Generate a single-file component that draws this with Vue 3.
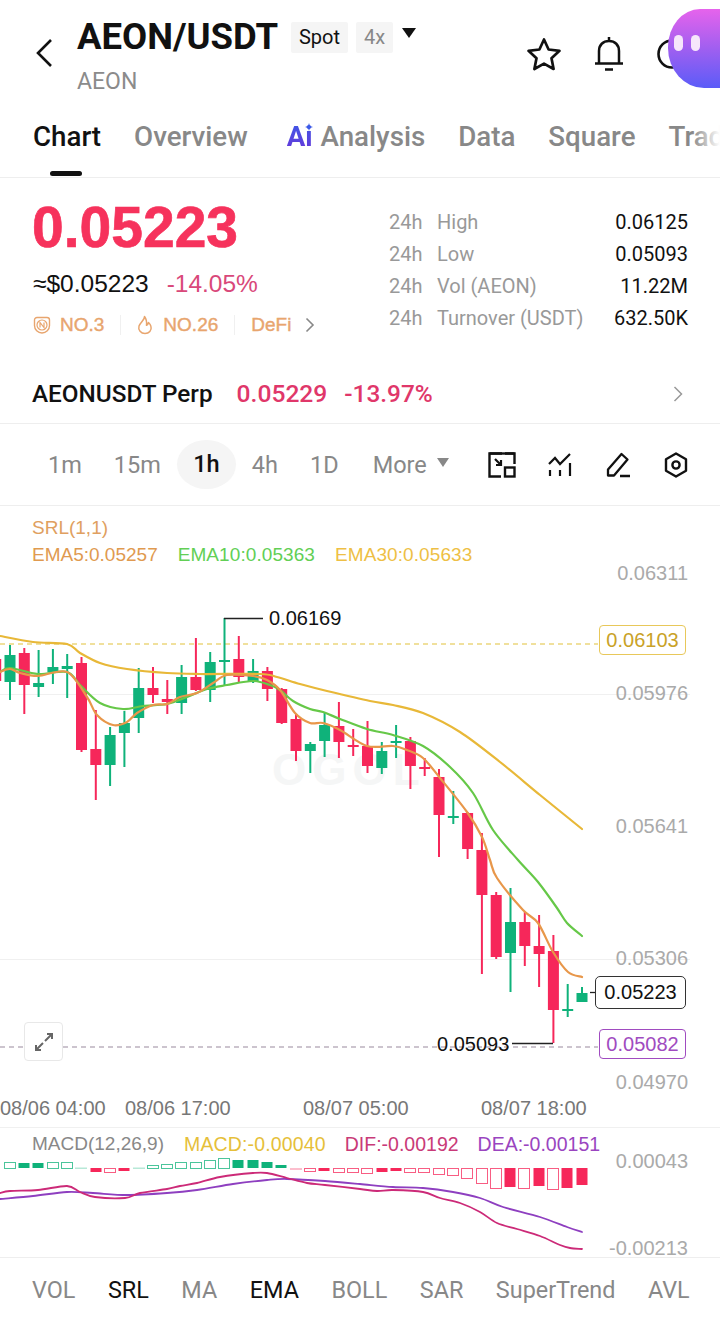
<template>
  <div class="page">
    <header class="top">
      <svg class="back" width="18" height="30" viewBox="0 0 18 30"><path d="M16 2 3 15l13 13" fill="none" stroke="#111" stroke-width="2.6" /></svg>
      <div class="pair">
        <div class="pair-line">
          <span class="pair-name">AEON/USDT</span>
          <span class="tag">Spot</span>
          <span class="tag tag-gray">4x</span>
          <span class="tag-arrow"></span>
        </div>
        <div class="pair-sub">AEON</div>
      </div>
      <div class="top-icons">
        <svg width="36" height="34" viewBox="0 0 36 34"><path d="M18 2.5l4.6 10 10.9 1.3-8 7.4 2.1 10.8L18 26.6 8.400 32l2.100-10.800-8-7.400 10.900-1.300z" fill="none" stroke="#111" stroke-width="2.700" stroke-linejoin="round" /></svg>
        <svg width="32" height="36" viewBox="0 0 32 36"><path d="M16 1v4M6 27V15C6 9 10 5 16 5s10 4 10 10v12M2 27.500h28M12 33.500h8" fill="none" stroke="#111" stroke-width="2.500" /></svg>
        <svg width="32" height="32" viewBox="0 0 32 32"><circle cx="16" cy="16" r="13.500" fill="none" stroke="#111" stroke-width="2.600" /></svg>
      </div>
    </header>
    <div class="bubble"><i></i><i></i></div>

    <nav class="tabs">
      <span class="tab tab-on">Chart</span>
      <span class="tab">Overview</span>
      <span class="tab tab-ai">
        <span class="ai-mark">Ai</span>
        <svg class="spark" width="8" height="8" viewBox="0 0 8 8"><path d="M4 0l1 3 3 1-3 1-1 3-1-3-3-1 3-1z" fill="#3a5be8" /></svg>
        Analysis
      </span>
      <span class="tab">Data</span>
      <span class="tab">Square</span>
      <span class="tab">Trade</span>
      <span class="tabs-fade"></span>
    </nav>

    <section class="price">
      <div class="price-left">
        <div class="price-big">0.05223</div>
        <div class="price-sub"><span>≈$0.05223</span><span class="chg">-14.05%</span></div>
        <div class="rank">
          <svg width="18" height="18" viewBox="0 0 18 18"><path d="M4 1.500h10a2.500 2.500 0 0 1 2.500 2.500v5.500a7.500 7.500 0 0 1-15 0V4A2.500 2.500 0 0 1 4 1.500z" fill="none" stroke="#e8a56e" stroke-width="1.400" /><circle cx="9" cy="9" r="5" fill="none" stroke="#e8a56e" stroke-width="1.200" /><path d="M7 11.500v-5l4 5v-5" fill="none" stroke="#e8a56e" stroke-width="1.200" /></svg>
          <span class="rank-txt r1">NO.3</span>
          <span class="rank-sep"></span>
          <svg width="16" height="20" viewBox="0 0 16 20"><path d="M7.500 1.500c.5 3-4 5.500-5.500 9.500-1.200 4 2 7.500 6 7.500s7-3 6-7c-.4-1.800-1.500-3-2.500-4-.3 1.500-1 2.300-2 2.800.4-3.300-.3-6.500-2-8.800z" fill="none" stroke="#e8a56e" stroke-width="1.500" stroke-linejoin="round" /></svg>
          <span class="rank-txt r2">NO.26</span>
          <span class="rank-sep"></span>
          <span class="rank-txt r3">DeFi</span>
          <svg class="rank-go" width="10" height="16" viewBox="0 0 10 16"><path d="M1.500 1.500 8 8l-6.500 6.500" fill="none" stroke="#888" stroke-width="1.600" /></svg>
        </div>
      </div>
      <div class="stats">
        <div class="stat" v-for="s in stats" :key="s.name">
          <span class="stat-h">24h</span>
          <span class="stat-name">{{ s.name }}</span>
          <span class="stat-val">{{ s.val }}</span>
        </div>
      </div>
    </section>

    <div class="perp">
      <span class="perp-name">AEONUSDT Perp</span>
      <span class="perp-num">0.05229</span>
      <span class="perp-chg">-13.97%</span>
      <svg class="perp-go" width="10" height="16" viewBox="0 0 10 16"><path d="M1.500 1 8.500 8l-7 7" fill="none" stroke="#999" stroke-width="1.500" /></svg>
    </div>

    <div class="frames">
      <span class="frame f1">1m</span>
      <span class="frame f2">15m</span>
      <span class="frame frame-on">1h</span>
      <span class="frame f4">4h</span>
      <span class="frame f5">1D</span>
      <span class="frame f6">More</span>
      <span class="more-arrow"></span>
      <div class="tools">
        <svg width="28" height="26" viewBox="0 0 28 26"><path d="M14 1.500H1.500v23H13M17 1.500h9.500V12" fill="none" stroke="#111" stroke-width="2.400" /><path d="M1.500 1.500h25" stroke="#111" stroke-width="2.400" /><rect x="17" y="15.500" width="9.500" height="9" fill="none" stroke="#111" stroke-width="2.400" /><path d="M7 7l6 6M8 13h5V8" fill="none" stroke="#111" stroke-width="2.200" /></svg>
        <svg width="24" height="24" viewBox="0 0 24 24"><path d="M1 11l6-6 5 6 10-10" fill="none" stroke="#111" stroke-width="2.200" /><path d="M2 17v6M12 17v6M22 10v13" stroke="#111" stroke-width="2.200" /></svg>
        <svg width="24" height="26" viewBox="0 0 24 26"><path d="M2 23.500v-6L15.500 2l6 5.500L8 23.500zM14 24h10" fill="none" stroke="#111" stroke-width="2.300" stroke-linejoin="round" /></svg>
        <svg width="24" height="26" viewBox="0 0 24 26"><path d="M12 1.500l10 5.700v11.600l-10 5.700-10-5.700V7.200z" fill="none" stroke="#111" stroke-width="2.400" stroke-linejoin="round" /><circle cx="12" cy="13" r="3.600" fill="none" stroke="#111" stroke-width="2.400" /></svg>
      </div>
    </div>

    <section class="chart">
      <svg class="plot" width="720" height="751" viewBox="0 506 720 751">
        <!-- grid -->
        <path d="M0 694.500H690M0 959.500H690M0 1127.500H720" stroke="#f0f0f0" fill="none" />
        <text class="mark" x="272" y="785">OGOL</text>

        <line x1="0" x2="598" y1="644" y2="644" stroke="#ecd67c" stroke-width="1.300" stroke-dasharray="5 4" />
        <line x1="0" x2="598" y1="1047" y2="1047" stroke="#9a8a9e" stroke-width="1.200" stroke-dasharray="5 4" />

        <!-- candles -->
        <g v-for="c in candles" :key="c[0]">
          <line :x1="c[0]" :x2="c[0]" :y1="c[1]" :y2="c[2]" :stroke="c[5] ? green : red" stroke-width="2" />
          <rect :x="c[0] - 5.500" :y="c[3]" width="11" :height="c[4] - c[3]" :fill="c[5] ? green : red" />
        </g>

        <path :d="ema30" class="ln" stroke="#e8b838" />
        <path :d="ema10" class="ln" stroke="#66c848" />
        <path :d="ema5" class="ln" stroke="#e8974a" />

        <!-- high / low callouts -->
        <path d="M224 618.500H263" stroke="#222" stroke-width="1.300" fill="none" />
        <text class="callout" x="269" y="625">0.06169</text>
        <path d="M512 1043.500H553" stroke="#222" stroke-width="1.300" fill="none" />
        <text class="callout" x="437" y="1051">0.05093</text>
        <path d="M590 992.500H595" stroke="#222" stroke-width="1.300" fill="none" />

        <!-- axis -->
        <text v-for="a in axis" :key="a[0]" class="ax" x="688" :y="a[1]">{{ a[0] }}</text>
        <text v-for="d in dates" :key="d[0]" class="date" :x="d[1]" y="1115">{{ d[0] }}</text>

        <!-- macd -->
        <g v-for="b in bars" :key="b.x">
          <rect :x="b.x - 5.500" :y="b.y + (b.solid ? 0 : .5)" width="11" :height="b.h" :fill="b.solid ? b.col : '#fff'" :stroke="b.solid ? 'none' : b.col" :stroke-opacity="b.h < 2 ? .3 : .75" />
        </g>
        <path :d="dea" class="ln thin" stroke="#8e3fc0" />
        <path :d="dif" class="ln thin" stroke="#cc2a78" />
      </svg>

      <div class="legend">
        <div class="srl">SRL(1,1)</div>
        <div class="emas">
          <span class="e5">EMA5:0.05257</span>
          <span class="e10">EMA10:0.05363</span>
          <span class="e30">EMA30:0.05633</span>
        </div>
      </div>

      <span class="badge badge-y">0.06103</span>
      <span class="badge badge-k">0.05223</span>
      <span class="badge badge-p">0.05082</span>

      <span class="expand">
        <svg width="20" height="20" viewBox="0 0 20 20"><path d="M11 9l7-7M13 2h5v5M9 11l-7 7M2 13v5h5" fill="none" stroke="#666" stroke-width="2" /></svg>
      </span>

      <div class="macd">
        <span class="m0">MACD(12,26,9)</span>
        <span class="m1">MACD:-0.00040</span>
        <span class="m2">DIF:-0.00192</span>
        <span class="m3">DEA:-0.00151</span>
      </div>
    </section>

    <nav class="inds">
      <span v-for="t in inds" :key="t" class="ind" :class="{ 'ind-on': t === 'SRL' || t === 'EMA' }">{{ t }}</span>
      <span class="inds-fade"></span>
    </nav>
  </div>
</template>

<script setup>
const red = '#f6275a'
const green = '#0fb27a'

const stats = [
  { name: 'High', val: '0.06125' },
  { name: 'Low', val: '0.05093' },
  { name: 'Vol (AEON)', val: '11.22M' },
  { name: 'Turnover (USDT)', val: '632.50K' },
]

const inds = ['VOL', 'SRL', 'MA', 'EMA', 'BOLL', 'SAR', 'SuperTrend', 'AVL']

const axis = [
  ['0.06311', 580], ['0.05976', 700], ['0.05641', 833], ['0.05306', 965], ['0.04970', 1089],
  ['0.00043', 1168], ['-0.00213', 1255],
]
const dates = [
  ['08/06 04:00', 0], ['08/06 17:00', 125], ['08/07 05:00', 303], ['08/07 18:00', 481],
]

// wick top, wick bottom, body top, body bottom, green?
const raw = [
  [652, 690, 659, 681, 0], [645, 700, 655, 682, 1], [648, 714, 653, 685, 0], [650, 697, 683, 687, 1],
  [649, 684, 667, 672, 1], [654, 698, 666, 669, 1], [657, 752, 663, 750, 0], [710, 800, 749, 765, 0],
  [727, 786, 735, 765, 1], [711, 767, 723, 733, 1], [668, 733, 688, 718, 1], [667, 703, 688, 695, 0],
  [680, 714, 699, 702, 0], [665, 714, 677, 703, 1], [638, 691, 677, 690, 0], [652, 702, 662, 690, 1],
  [618, 685, 660, 662, 1], [636, 683, 659, 677, 0], [659, 683, 671, 681, 1], [667, 701, 671, 689, 0],
  [688, 724, 689, 723, 0], [714, 761, 719, 751, 0], [742, 773, 744, 751, 1], [713, 757, 725, 741, 1],
  [702, 758, 726, 742, 0], [729, 756, 745, 747, 0], [721, 773, 746, 766, 0], [742, 774, 751, 768, 1],
  [725, 758, 741, 743, 1], [737, 789, 741, 766, 0], [758, 776, 767, 769, 0], [769, 857, 777, 815, 0],
  [791, 824, 816, 818, 1], [812, 859, 813, 849, 0], [833, 974, 850, 895, 0], [892, 959, 895, 957, 0],
  [888, 992, 922, 953, 1], [912, 966, 922, 946, 0], [915, 987, 946, 954, 0], [935, 1043, 951, 1010, 0],
  [984, 1017, 1009, 1011, 1], [987, 1002, 993, 1002, 1],
]
const stepX = i => -4.3 + 14.3 * i
const candles = raw.map((c, i) => [stepX(i), c[0], c[1], c[2], c[3], c[4]])

// smooth a "x,y x,y" list into a path
const smooth = str => {
  const p = str.split(' ').map(s => s.split(',').map(Number))
  let d = `M${p[0][0]} ${p[0][1]}`
  for (let i = 0; i < p.length - 1; i++) {
    const a = p[i - 1] || p[i]
    const b = p[i]
    const c = p[i + 1]
    const e = p[i + 2] || c
    const k = 0.16
    d += ` C${(b[0] + (c[0] - a[0]) * k).toFixed(1)} ${(b[1] + (c[1] - a[1]) * k).toFixed(1)} ${(c[0] - (e[0] - b[0]) * k).toFixed(1)} ${(c[1] - (e[1] - b[1]) * k).toFixed(1)} ${c[0]} ${c[1]}`
  }
  return d
}

const ema30 = smooth('0,636 33,642 67,644 80,653 100,663 127,669 167,673 200,674 260,674 277,677 300,684 327,691 370,701 393,705 423,713 460,732 500,762 540,795 582,829')
const ema10 = smooth('0,672 10,668 38,674 67,672 80,685 100,703 123,709 143,706 167,704 187,697 207,689 227,685 253,681 270,685 280,690 293,701 310,709 323,712 340,719 367,729 393,735 423,746 450,767 473,793 493,830 518,860 538,882 557,908 567,923 582,936')
const ema5 = smooth('0,672 10,669 20,673 38,676 67,672 87,697 97,715 113,725 127,722 137,713 153,705 167,704 180,697 197,693 213,683 227,675 253,676 267,680 280,690 295,713 310,723 323,723 340,730 367,746 393,746 407,750 423,758 440,778 467,812 482,837 490,860 497,878 523,910 538,923 553,952 568,972 582,977')

// [zero line at 1168] top or bottom of each histogram bar, h flag: filled
const histo = [
  [10, -6, 0], [24, -5, 1], [38, -5, 1], [53, -6, 0], [67, -6, 0], [81, -.5, 0], [96, 4, 1], [110, 4, 0],
  [124, 3, 1], [139, -.5, 0], [153, -3, 0], [167, -4, 0], [181, -6, 0], [196, -6, 0], [210, -8, 0], [224, -10, 0],
  [238, -8, 1], [253, -8, 1], [267, -6, 1], [281, -3, 1], [296, 1, 0], [310, 3, 0], [324, 3, 1], [339, 4, 0],
  [353, 4, 0], [367, 5, 0], [382, 4, 1], [396, 3, 1], [410, 4, 0], [424, 4, 0], [439, 6, 0], [453, 7, 0],
  [467, 10, 0], [482, 15, 0], [496, 20, 0], [510, 19, 1], [524, 20, 0], [539, 18, 1], [553, 21, 0], [567, 20, 1], [582, 17, 1],
]
const bars = histo.map(([x, v, solid]) => {
  const up = v < 0
  const h = Math.abs(v)
  return { x, y: up ? 1168 - h : 1168, h, solid: !!solid, col: up ? green : red }
})

const dif = smooth('0,1193 10,1191 38,1190 67,1186 80,1192 95,1197 125,1198 140,1193 167,1189 180,1186 197,1183 220,1177 253,1173 267,1173 287,1178 307,1183 325,1185 360,1189 377,1191 393,1190 423,1192 440,1198 460,1203 480,1212 497,1223 517,1229 540,1236 560,1245 570,1248 582,1249')
const dea = smooth('0,1199 33,1196 67,1192 93,1193 127,1195 167,1193 197,1190 233,1184 267,1180 287,1179 325,1181 360,1184 393,1187 423,1188 453,1192 480,1198 503,1207 540,1217 567,1227 582,1232')
</script>

<style>
html, body { margin: 0; padding: 0; background: #fff; }
</style>

<style scoped>
.page {
  width: 720px;
  height: 1318px;
  overflow: hidden;
  position: relative;
  background: #fff;
  font-family: "Liberation Sans", Arial, sans-serif;
  color: #111;
}
.top {
  height: 102px;
  display: flex;
  align-items: flex-start;
  padding-left: 35px;
  box-sizing: border-box;
}
.back { margin-top: 38px; }
.pair { margin-left: 24px; padding-top: 15px; }
.pair-line { display: flex; align-items: center; height: 42px; }
.pair-name {
  font: 700 36.500px "Roboto", sans-serif;
  width: 214px;
}
.tag {
  height: 31px;
  line-height: 31px;
  width: 57px;
  text-align: center;
  background: #f5f5f5;
  border-radius: 2px;
  font: 400 20px/31px "Roboto", sans-serif;
  margin-top: 3px;
}
.tag-gray { width: 37px; margin-left: 8px; color: #888; }
.tag-arrow {
  margin: -7px 0 0 9px;
  border-left: 7px solid transparent;
  border-right: 7px solid transparent;
  border-top: 10px solid #111;
}
.pair-sub {
  margin-top: 12px;
  font: 400 23px/26px "Roboto", sans-serif;
  color: #8b8b8b;
}
.top-icons {
  position: absolute;
  left: 526px;
  top: 36px;
  display: flex;
  align-items: center;
  gap: 31px;
}
.bubble {
  position: absolute;
  left: 668px;
  top: 9px;
  width: 90px;
  height: 79px;
  border-radius: 32px 0 0 36px / 38px 0 0 40px;
  background: linear-gradient(180deg, #e663ec 0%, #a05ff0 50%, #5b5cf8 100%);
  display: flex;
  gap: 8px;
  padding: 26px 0 0 6px;
  box-sizing: border-box;
}
.bubble i {
  width: 9px;
  height: 16px;
  border-radius: 5px;
  background: #f6e6fb;
}
.tabs {
  height: 76px;
  box-sizing: border-box;
  border-bottom: 1px solid #eee;
  display: flex;
  padding: 16px 0 0 33px;
  gap: 33px;
  white-space: nowrap;
  position: relative;
  overflow: hidden;
}
.tab {
  font: 500 27.700px/38px "Roboto", sans-serif;
  color: #888;
  position: relative;
  flex: none;
}
.tab-on { color: #111; }
.tab-on::after {
  content: "";
  position: absolute;
  left: 17px;
  width: 32px;
  top: 53px;
  height: 5px;
  border-radius: 3px;
  background: #111;
}
.tab-ai { margin-left: 6px; }
.ai-mark {
  font-weight: 700;
  margin-right: 1px;
  background: linear-gradient(180deg, #3a5be8, #6a35d8);
  -webkit-background-clip: text;
  background-clip: text;
  color: transparent;
}
.spark { position: absolute; left: 18px; top: 5px; }
.tabs-fade {
  position: absolute;
  right: 0;
  top: 0;
  bottom: 0;
  width: 28px;
  background: linear-gradient(90deg, rgba(255, 255, 255, 0), #fff);
}
.price {
  height: 176px;
  display: flex;
  justify-content: space-between;
  padding: 0 32px 0 33px;
  box-sizing: border-box;
}
.price-left { width: 340px; }
.price-big {
  margin: 16px 0 0 -1px;
  font: 700 57px/66px "Liberation Sans", sans-serif;
  color: #f6325c;
  -webkit-text-stroke: .7px #f6325c;
}
.price-sub {
  margin-top: 10px;
  font: 400 24.500px/28px "Liberation Sans", sans-serif;
  display: flex;
  gap: 18px;
}
.chg { color: #d9487a; }
.rank {
  display: flex;
  align-items: center;
  margin-top: 13px;
  height: 28px;
}
.rank-txt { font: 500 19px/28px "Liberation Sans", sans-serif; color: #e8a56e; -webkit-text-stroke: .4px #e8a56e; }
.r1 { margin-left: 9px; }
.r2 { margin-left: 10px; }
.rank-sep { width: 1px; height: 20px; background: #f0f0f0; margin: 0 16px; }
.rank-go { margin-left: 14px; }
.stats { padding-top: 28px; width: 299px; }
.stat {
  display: flex;
  height: 32px;
  font: 400 20px/32px "Roboto", sans-serif;
  color: #999;
}
.stat-h { width: 48px; }
.stat-val { margin-left: auto; color: #111; }
.perp {
  height: 70px;
  border-bottom: 1px solid #eee;
  box-sizing: border-box;
  display: flex;
  align-items: center;
  padding: 11px 37px 0 32px;
  font: 500 24.300px/30px "Roboto", sans-serif;
}
.perp-num { margin-left: 24px; color: #e0376a; font-size: 24.600px; }
.perp-chg { margin-left: 17px; color: #e0376a; font-size: 24.400px; }
.perp-go { margin-left: auto; }
.frames {
  height: 82px;
  border-bottom: 1px solid #eee;
  box-sizing: border-box;
  position: relative;
  display: flex;
  align-items: center;
  font: 400 23.500px/30px "Roboto", sans-serif;
  color: #888;
}
.f1 { margin-left: 48px; }
.f2 { margin-left: 32px; }
.frame-on {
  margin-left: 16px;
  width: 59px;
  height: 49px;
  line-height: 49px;
  border-radius: 50%;
  text-align: center;
  background: #f5f5f5;
  color: #111;
  font-weight: 500;
}
.f4 { margin-left: 16px; }
.f5 { margin-left: 32px; }
.f6 { margin-left: 34px; }
.more-arrow {
  margin: -4px 0 0 10px;
  border-left: 6px solid transparent;
  border-right: 6px solid transparent;
  border-top: 9px solid #888;
}
.tools {
  position: absolute;
  left: 488px;
  top: 28px;
  display: flex;
  align-items: center;
  gap: 32px;
}
.tools svg:nth-child(n+3) { margin-left: 2px; }
.chart {
  position: relative;
  height: 751px;
}
.plot { position: absolute; left: 0; top: 0; }
.ln { fill: none; stroke-width: 2.200; stroke-linejoin: round; stroke-linecap: round; }
.thin { stroke-width: 1.800; }
.mark { font: 700 44px "Liberation Sans", sans-serif; fill: #f5f6f6; letter-spacing: 6px; }
.callout { font: 400 20px "Liberation Sans", sans-serif; fill: #111; }
.ax { font: 400 20px "Liberation Sans", sans-serif; fill: #aaa; text-anchor: end; }
.date { font: 400 20px "Liberation Sans", sans-serif; fill: #777; }
.legend {
  position: relative;
  padding: 8px 0 0 32px;
  font: 400 19px/27px "Liberation Sans", sans-serif;
}
.srl { color: #e0a060; }
.emas { display: flex; gap: 20px; }
.e5 { color: #e09a50; }
.e10 { color: #62cf55; letter-spacing: .08px; }
.e30 { color: #eebf45; letter-spacing: .08px; }
.badge {
  position: absolute;
  left: 599px;
  width: 87px;
  box-sizing: border-box;
  text-align: center;
  background: #fff;
  border: 1px solid;
  border-radius: 4px;
  font: 400 20px/28px "Liberation Sans", sans-serif;
}
.badge-y { top: 119px; color: #c9a227; border-color: #e8c85a; }
.badge-k { top: 470px; left: 595px; width: 91px; color: #111; border-color: #333; border-radius: 5px; line-height: 31px; }
.badge-p { top: 523px; color: #a04bc0; border-color: #a04bc0; }
.expand {
  position: absolute;
  left: 24px;
  top: 516px;
  width: 39px;
  height: 39px;
  box-sizing: border-box;
  border: 1px solid #e8e8e8;
  border-radius: 4px;
  background: #fff;
  display: flex;
  align-items: center;
  justify-content: center;
}
.macd {
  position: absolute;
  left: 32px;
  top: 625px;
  display: flex;
  gap: 20px;
  font: 400 19.500px/26px "Liberation Sans", sans-serif;
  white-space: nowrap;
}
.m0 { color: #888; font-size: 19px; }
.m1 { color: #e6bf3a; letter-spacing: .15px; }
.m2 { color: #c93a78; margin-left: -1px; }
.m3 { color: #9a45c0; margin-left: -1px; }
.inds {
  height: 61px;
  border-top: 1px solid #eee;
  box-sizing: border-box;
  display: flex;
  align-items: center;
  padding: 3px 0 0 32px;
  gap: 32.500px;
  position: relative;
  overflow: hidden;
  font: 400 23.400px/30px "Roboto", sans-serif;
  color: #888;
}
.ind { flex: none; }
.ind-on { color: #111; }
.inds-fade {
  position: absolute;
  right: 0;
  top: 0;
  bottom: 0;
  width: 34px;
  background: linear-gradient(90deg, rgba(255, 255, 255, 0), #fff);
}
</style>
